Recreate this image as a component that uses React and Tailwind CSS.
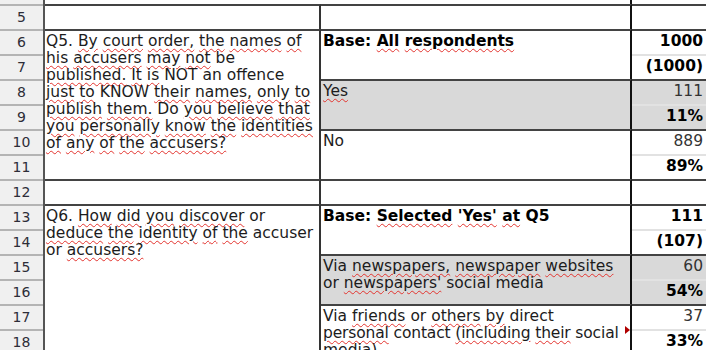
import React from 'react'

const DARK = 'border-t-2 border-t-[#434343]'
const LIGHT = 'border-t-2 border-t-[#e2e2e2]'
const COL_A = 'col-start-1 border-r-2 border-r-[#333] pl-[1px] pt-[2px]'
const COL_B = 'col-start-2 border-r-2 border-r-[#111] pl-[2px] pt-[2px]'
const COL_C = 'col-start-3 text-right pr-[3px] pt-[2px]'
const GRAY = 'bg-[#d9d9d9]'

// words starting with ~ get the spell-check squiggle
function Line({ text, className = '' }) {
  const words = text.split(' ')
  return (
    <div className={`whitespace-nowrap ${className}`}>
      {words.map((w, i) => (
        <React.Fragment key={i}>
          {i > 0 && ' '}
          {w.startsWith('~') ? (
            <span className="underline decoration-wavy decoration-[#e3342f] decoration-1 underline-offset-2">
              {w.slice(1)}
            </span>
          ) : (
            w
          )}
        </React.Fragment>
      ))}
    </div>
  )
}

function Lines({ lines }) {
  return lines.map((l, i) => <Line key={i} text={l} />)
}

const rowNumbers = [4, 5, 6, 7, 8, 9, 10, 11, 12, 13, 14, 15, 16, 17, 18]

export default function App() {
  return (
    <div className="w-[706px] h-[350px] overflow-hidden bg-white font-['DejaVu_Sans',Verdana,sans-serif] text-[15.5px] leading-[17px] text-[#1c1c1c]">
      <div className="flex mt-[-21px]">
        {/* Row headers */}
        <div className="w-[45px] shrink-0 flex flex-col bg-[#f0f0f0] border-r-2 border-r-[#555]">
          {rowNumbers.map(n => (
            <div
              key={n}
              className="h-[25px] flex items-center justify-center border-t-2 border-t-[#b4b4b4] text-[14px] text-[#2d2d38]"
            >
              {n}
            </div>
          ))}
        </div>

        {/* Cells */}
        <div className="grid grid-cols-[276px_311px_74px] grid-rows-[repeat(15,25px)]">
          {/* row 4 */}
          <div className="col-start-2 row-start-1 border-r-2 border-r-[#111]" />
          <div className="col-start-3 row-start-1 text-right pr-[3px] pt-[4px] font-bold text-black">(1000)</div>

          {/* row 5 */}
          <div className={`${COL_A} ${DARK} row-start-2`} />
          <div className={`${COL_B} ${DARK} row-start-2`} />
          <div className={`${COL_C} ${DARK} row-start-2`} />

          {/* Q5 */}
          <div className={`${COL_A} ${DARK} row-start-3 row-span-6`}>
            <Lines
              lines={[
                'Q5. ~By ~court ~order, ~the ~names ~of',
                '~his ~accusers ~may ~not be',
                '~published. ~It ~is NOT an offence',
                '~just ~to KNOW ~their ~names, ~only ~to',
                '~publish ~them. Do ~you ~believe ~that',
                '~you ~personally ~know ~the ~identities',
                '~of ~any ~of ~the ~accusers?',
              ]}
            />
          </div>
          <div className={`${COL_B} ${DARK} row-start-3 row-span-2 font-bold text-black`}>
            <Line text="Base: ~All ~respondents" />
          </div>
          <div className={`${COL_C} ${DARK} row-start-3 font-bold text-black`}>1000</div>
          <div className={`${COL_C} ${LIGHT} row-start-4 font-bold text-black`}>(1000)</div>

          <div className={`${COL_B} ${DARK} ${GRAY} row-start-5 row-span-2`}>
            <Line text="~Yes" />
          </div>
          <div className={`${COL_C} ${DARK} ${GRAY} row-start-5 text-[#333]`}>111</div>
          <div className={`${COL_C} ${LIGHT} ${GRAY} row-start-6 font-bold text-black`}>11%</div>

          <div className={`${COL_B} ${DARK} row-start-7 row-span-2`}>
            <Line text="No" />
          </div>
          <div className={`${COL_C} ${DARK} row-start-7 text-[#333]`}>889</div>
          <div className={`${COL_C} ${LIGHT} row-start-8 font-bold text-black`}>89%</div>

          {/* row 12 */}
          <div className={`${COL_A} ${DARK} row-start-9`} />
          <div className={`${COL_B} ${DARK} row-start-9`} />
          <div className={`${COL_C} ${DARK} row-start-9`} />

          {/* Q6 */}
          <div className={`${COL_A} ${DARK} row-start-10 row-span-6`}>
            <Lines
              lines={[
                'Q6. ~How ~did ~you ~discover or',
                '~deduce ~the ~identity ~of ~the accuser',
                'or ~accusers?',
              ]}
            />
          </div>
          <div className={`${COL_B} ${DARK} row-start-10 row-span-2 font-bold text-black`}>
            <Line text="Base: ~Selected ~'Yes' ~at Q5" />
          </div>
          <div className={`${COL_C} ${DARK} row-start-10 font-bold text-black`}>111</div>
          <div className={`${COL_C} ${LIGHT} row-start-11 font-bold text-black`}>(107)</div>

          <div className={`${COL_B} ${DARK} ${GRAY} row-start-12 row-span-2`}>
            <Lines lines={['Via ~newspapers, ~newspaper ~websites', "or ~newspapers' social media"]} />
          </div>
          <div className={`${COL_C} ${DARK} ${GRAY} row-start-12 text-[#333]`}>60</div>
          <div className={`${COL_C} ${LIGHT} ${GRAY} row-start-13 font-bold text-black`}>54%</div>

          <div className={`${COL_B} ${DARK} row-start-14 row-span-2 relative`}>
            <Line text="Via ~friends or ~others ~by direct" />
            <Line text="~personal contact ~(including ~their social" className="tracking-[-0.15px]" />
            <Line text="~media)" />
            {/* clipped-text marker */}
            <span className="absolute right-0 top-[20px] w-0 h-0 border-y-[4px] border-y-transparent border-l-[5px] border-l-[#b00000]" />
          </div>
          <div className={`${COL_C} ${DARK} row-start-14 text-[#333]`}>37</div>
          <div className={`${COL_C} ${LIGHT} row-start-15 font-bold text-black`}>33%</div>
        </div>
      </div>
    </div>
  )
}
